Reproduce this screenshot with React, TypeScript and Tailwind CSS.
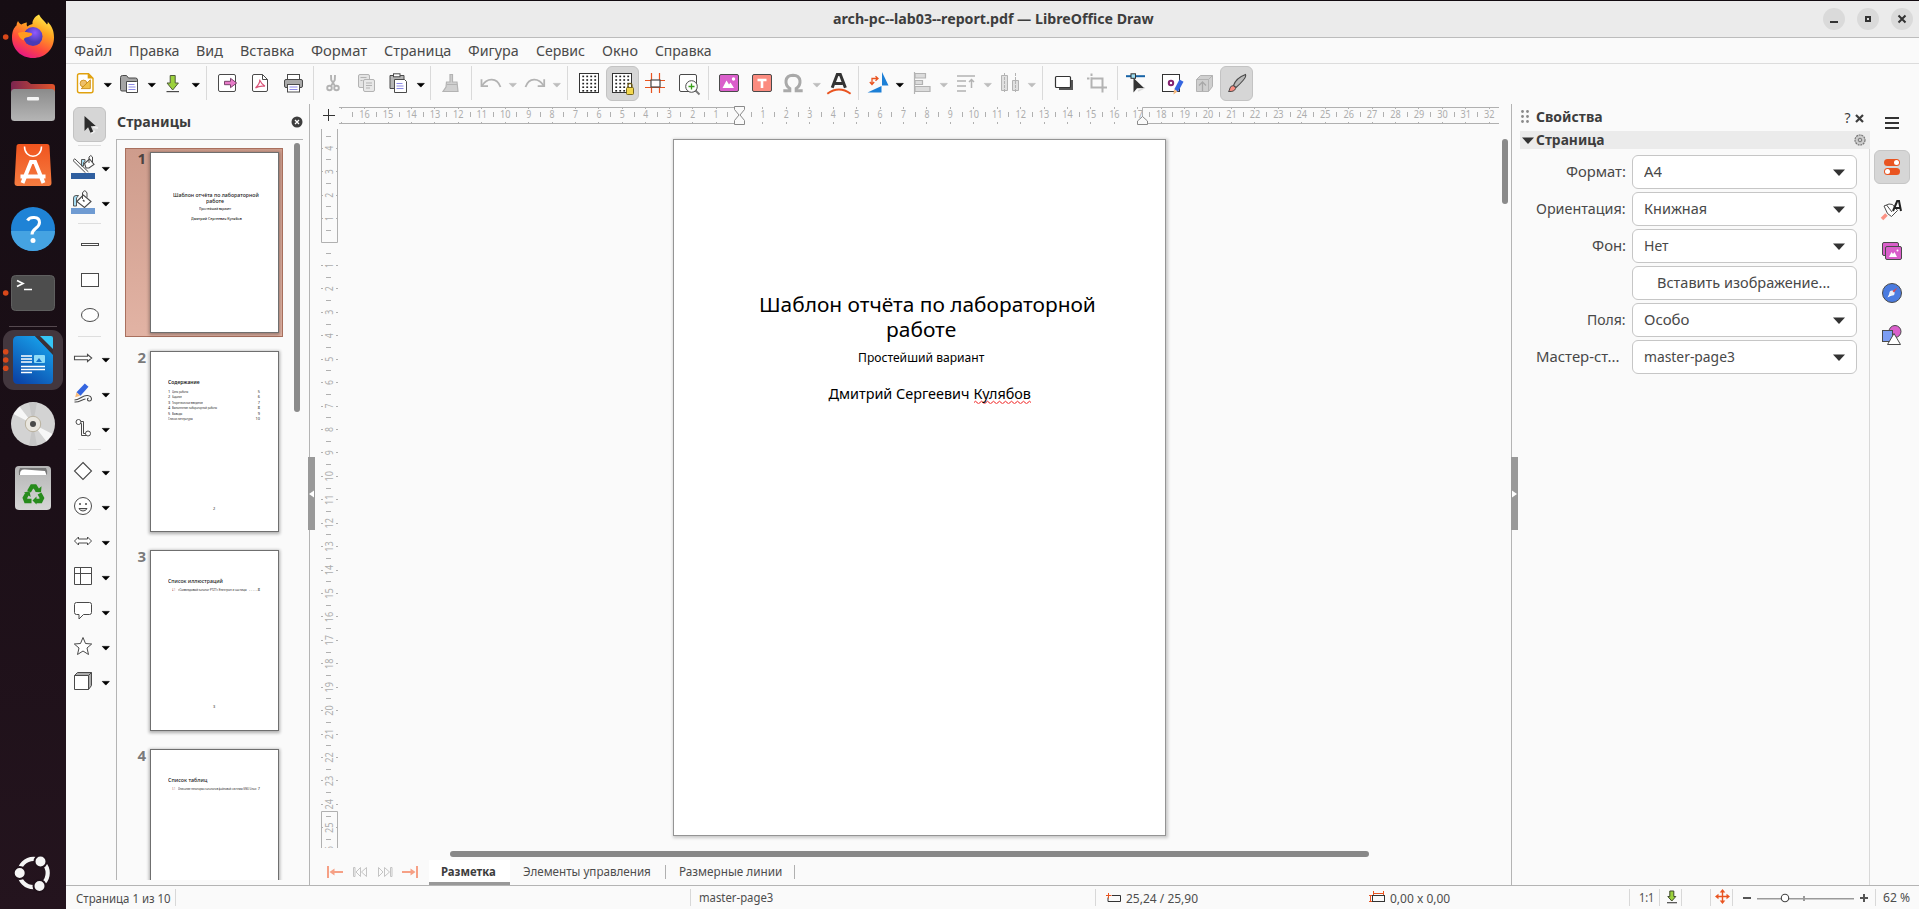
import { useLayoutEffect, useRef, useState } from "react";
import type { ReactNode } from "react";

/* Text set to a fixed advance width. */
function T({ w, className = "", children }: { w: number; className?: string; children: ReactNode }) {
  const ref = useRef<HTMLSpanElement>(null);
  const [scale, setScale] = useState(1);
  useLayoutEffect(() => {
    if (ref.current) setScale(w / ref.current.offsetWidth);
  }, [w]);
  return (
    <span className={"block shrink-0 whitespace-nowrap " + className} style={{ width: w }}>
      <span ref={ref} className="inline-block origin-left" style={{ transform: `scaleX(${scale})` }}>
        {children}
      </span>
    </span>
  );
}

const D = "#4a4a4a";
const G = "#b3b3b3";

function Ic({ children, w = 23 }: { children: ReactNode; w?: number }) {
  return (
    <svg width={w} height={24} viewBox={`0 0 ${w} 24`} fill="none" className="shrink-0 overflow-visible">
      {children}
    </svg>
  );
}

function Btn({ children, on }: { children: ReactNode; on?: boolean }) {
  return (
    <div
      className={
        "flex h-[35px] w-[33px] shrink-0 justify-center rounded-md border pt-1 " +
        (on ? "border-[#c3c3c3] bg-[#d6d6d6]" : "border-transparent")
      }
    >
      <Ic>{children}</Ic>
    </div>
  );
}

function Arr({ off }: { off?: boolean }) {
  return (
    <svg width="11" height="24" viewBox="0 0 11 24" className="mt-[5px] shrink-0">
      <path d="M2.3 12.4h7L5.8 16.1z" fill={off ? "#bdbdbd" : "#000"} stroke={off ? "#bdbdbd" : "#000"} strokeWidth=".7" />
    </svg>
  );
}

function Sep({ className }: { className: string }) {
  return (
    <div className={"flex h-[34px] shrink-0 justify-center " + className}>
      <div className="w-px bg-[#dadada]" />
    </div>
  );
}

const grid = [0, 1, 2, 3, 4].flatMap((r) => [0, 1, 2, 3].map((c) => [4 + c * 4, 4 + r * 3.6]));

function GridIcon() {
  return (
    <>
      <rect x="1.500" y="2.500" width="19" height="19" fill="#fff" stroke="#333" />
      {grid.map(([x, y], i) => (
        <rect key={i} x={x + 0.3} y={y + 0.6} width="1.800" height="1.600" fill="#222" />
      ))}
    </>
  );
}

function Toolbar() {
  return (
    <div className="flex h-10 pt-0.5 pl-[3px]">
      <Btn>
        <path d="M5.500 2.700h9l4.500 4.600v12.400q0 2-2 2H5.500q-2 0-2-2v-15q0-2 2-2z" fill="#fff" stroke="#e0a10e" strokeWidth="1.400" />
        <path d="M13.700 2.200l5.600 5.400h-5.600z" fill="#e0a10e" />
        <circle cx="9.500" cy="12.500" r="3.400" fill="#eec06a" stroke="#c98a12" strokeWidth=".8" />
        <path d="M7.200 17.600h9.100V8.800z" fill="#f0c14a" stroke="#c98a12" strokeWidth=".9" />
      </Btn>
      <Arr />
      <Btn>
        <path d="M2.500 18.500v-12q0-2 2-2h4l2 2.500h7q2 0 2 2v9.500q0 1.500-1.500 1.500H4q-1.500 0-1.500-1.500z" fill="#a5a5a5" stroke={D} />
        <path d="M8.500 10.500h10l1 1v10h-11z" fill="#fff" stroke={D} />
        <path d="M10.500 13.500h6M10.500 16h7M10.500 18.500h7" stroke="#8e8be6" />
      </Btn>
      <Arr />
      <Btn>
        <path d="M8.200 4.500h5v7.500h3.200l-5.700 7-5.700-7h3.200z" fill="#9bd13c" stroke="#4f5b3a" />
        <path d="M4.500 20.600h12.500" stroke={D} strokeWidth="1.200" />
      </Btn>
      <Arr />
      <Sep className="w-[10px]" />
      <Btn>
        <rect x="2.500" y="3.500" width="17" height="17" rx="1.500" fill="#fff" stroke={D} />
        <path d="M8.500 10.300h6V7.300l6.200 4.700-6.200 4.700v-3h-6z" fill="#e77bc8" stroke="#6d3a60" strokeWidth=".9" />
      </Btn>
      <Btn>
        <path d="M3.500 5q0-1.500 1.500-1.500h8.500l5 5v10.500q0 1.500-1.500 1.500H5q-1.500 0-1.500-1.500z" fill="#fff" stroke={D} />
        <path d="M13.500 3.500v5h5" stroke={D} />
        <path d="M10.700 8.500q.5 4-4.200 8.500 4-2.500 9.500-1.700-3.500-2-5-5.800" stroke="#d9557a" strokeWidth="1.100" />
      </Btn>
      <Btn>
        <rect x="5.500" y="3.500" width="12" height="6" fill="#fff" stroke={D} />
        <rect x="2.500" y="8.500" width="18" height="8" rx="1.500" fill="#a9a9a9" stroke={D} />
        <rect x="5.500" y="13.500" width="12" height="7.500" fill="#fff" stroke={D} />
        <path d="M7.500 16h8M7.500 18.500h8" stroke="#8e8be6" />
      </Btn>
      <Sep className="w-[6px]" />
      <Btn>
        <path d="M10 4l.2 5 3.800 6M14 4l-.2 5-3.800 6" stroke={G} strokeWidth="1.900" />
        <circle cx="8.500" cy="17" r="2.300" stroke={G} strokeWidth="1.900" />
        <circle cx="15.500" cy="17" r="2.300" stroke={G} strokeWidth="1.900" />
      </Btn>
      <Btn>
        <rect x="4.500" y="3.500" width="11" height="13" rx="1.500" fill="#e4e4e4" stroke={G} />
        <rect x="9.500" y="8.500" width="11" height="12" rx="1.500" fill="#e8e8e8" stroke={G} />
        <path d="M6.500 6.500h6M6.500 9.500h2M12 12h6M12 14.500h6M12 17h4" stroke={G} />
      </Btn>
      <Btn>
        <path d="M3 4.500h14v13H3z" fill="#b5b5b5" stroke={D} />
        <rect x="6.500" y="2.800" width="6.500" height="3" fill="#fff" stroke={D} />
        <path d="M7.500 8.500h10l2 2v11h-12z" fill="#fff" stroke={D} />
        <path d="M9.500 12.500h6M9.500 15h7M9.500 17.500h7" stroke="#8e8be6" />
      </Btn>
      <Arr />
      <Sep className="w-[9px]" />
      <Btn>
        <path d="M10 3.500h2.500v7.500h4.500l1 9.500H3l3-4.500.5-5H10z" fill="#d0d0d0" stroke={G} strokeWidth="1.200" />
        <path d="M7 13.500h10" stroke={G} />
      </Btn>
      <Sep className="w-[6px]" />
      <Btn>
        <path d="M2.500 8.200v7h6.500" stroke={G} strokeWidth="1.800" />
        <path d="M3 14.800C8 6.500 18 6.500 21.500 16" stroke={G} strokeWidth="1.800" />
      </Btn>
      <Arr off />
      <Btn>
        <path d="M21.200 8.200v7h-6.500" stroke={G} strokeWidth="1.800" />
        <path d="M20.700 14.800C15.700 6.500 6 6.500 2.500 16" stroke={G} strokeWidth="1.800" />
      </Btn>
      <Arr off />
      <Sep className="w-[11px]" />
      <Btn>
        <GridIcon />
      </Btn>
      <Btn on>
        <GridIcon />
        <path d="M17 17v-2.500q0-2.200 2-2.200t2 2.200V17" stroke="#6b5a10" strokeWidth="1.200" />
        <rect x="15.500" y="16.500" width="7" height="7" rx="1" fill="#f3d84e" stroke="#6b5a10" strokeWidth=".9" />
      </Btn>
      <Btn>
        <path d="M7.500 2v20M15.500 2v20M1 9.500h20M1 16.500h20" stroke="#e95420" strokeWidth="1.200" />
        <rect x="7" y="9" width="9" height="7" fill="#fff" stroke={D} strokeWidth="1.200" />
      </Btn>
      <Btn>
        <rect x="2.500" y="3.500" width="17" height="17" rx="1.500" fill="#fff" stroke={D} />
        <circle cx="14.500" cy="15.500" r="5.800" fill="#fff" stroke={D} />
        <path d="M14.500 12.500v6M11.500 15.500h6" stroke="#3aa01c" strokeWidth="1.300" />
        <path d="M18.500 19.500l4 4" stroke="#777" strokeWidth="1.800" />
      </Btn>
      <Sep className="w-[7px]" />
      <Btn>
        <rect x="2.500" y="3.500" width="19" height="17" rx="1.500" fill="#da5fcb" stroke={D} />
        <path d="M5.500 17l4-7.500 2.500 4 1.500-2 3.500 5.500z" fill="#fff" />
        <circle cx="16.500" cy="8" r="1.700" fill="#fff" />
      </Btn>
      <Btn>
        <rect x="2.500" y="3.500" width="19" height="17" rx="1.500" fill="#fb8c80" stroke={D} />
        <path d="M7.500 9h9M12 9v8" stroke="#fff" strokeWidth="2.600" />
      </Btn>
      <Btn>
        <path
          d="M.3 19.800h6.500v-2.300C1.500 14 1 4.500 10 4.200c9 .3 8.500 9.800 3.200 13.300v2.300h6.500"
          stroke="#a9a9a9"
          strokeWidth="3"
        />
      </Btn>
      <Arr off />
      <Btn>
        <path d="M5.200 16.800L10.300 3.500h3l5.100 13.300M8 12.500h7.500" stroke="#333" strokeWidth="3" />
        <path d="M.3 22.800q11.700-8.500 23.300 0" stroke="#e95420" strokeWidth="2" />
      </Btn>
      <Sep className="w-[6px]" />
      <Btn>
        <path d="M16 1v13.500h6.500zM15.500 15v6.500H1.500z" fill="#1c7fd6" />
        <path d="M11.500 7.500H6V13M9.500 5.300l2.500 2.200-2.500 2.200M3.800 11L6 13.500 8.200 11" stroke="#e95420" strokeWidth="1.300" />
      </Btn>
      <Arr />
      <Btn>
        <path d="M4.500 1v22" stroke={G} strokeWidth="1.200" />
        <path d="M5 2.500h10.500v4.500H5zM5 9.500h7.500v4H5zM5 15.500h15v5H5z" fill="#dcdcdc" stroke={G} strokeWidth="1.200" />
      </Btn>
      <Arr off />
      <Btn>
        <path d="M3 5h18M3 10h9M3 15h9M3 20h9" stroke={G} strokeWidth="1.700" />
        <path d="M17.500 17V8.500M15 11l2.500-2.500L20 11" stroke={G} strokeWidth="1.500" />
      </Btn>
      <Arr off />
      <Btn>
        <path d="M3.500 4.500h6v15h-6zM14.500 9.500h6v10h-6z" fill="#e0e0e0" stroke={G} />
        <path d="M6.500 2v20M17.500 2v20" stroke={G} strokeDasharray="3 1" />
      </Btn>
      <Arr off />
      <Sep className="w-[10px]" />
      <Btn>
        <rect x="7" y="9" width="14" height="10" fill="#555" />
        <rect x="3.500" y="5.500" width="15" height="11" rx="1" fill="#fff" stroke="#333" strokeWidth="1.200" />
      </Btn>
      <Btn>
        <path d="M6.500 2.500v14h15.500M2 7.500h15.500v14" stroke={G} strokeWidth="2" strokeDasharray="2.500 1.200 40" />
      </Btn>
      <Sep className="w-[8px]" />
      <Btn>
        <path d="M0 5.200h19" stroke="#1763a6" strokeWidth="2" />
        <rect x="5" y="2.800" width="4.500" height="4.500" fill="#9fe0f5" stroke="#333" />
        <path d="M12 20l7-3.500" stroke="#ddd" strokeWidth="1.500" />
        <path d="M7.500 7v14.500l3.500-4.200 7-.3z" fill="#333" />
      </Btn>
      <Btn>
        <rect x="3.500" y="3.500" width="17" height="17" fill="#fff" stroke="#333" />
        <circle cx="12" cy="12" r="2.200" stroke="#83226f" strokeWidth="2" />
        <path d="M20.500 8.500l4 2.300-5.500 10-3.700-2.500z" fill="#3465e0" />
        <path d="M15 18.200l3.500 2.200-4 3z" fill="#f5b97c" />
      </Btn>
      <Btn>
        <path d="M4.500 8.500l4-4h12v11l-4 5h-12z" fill="#cfcfcf" stroke={G} />
        <path d="M4.500 8.500h12v12M16.500 8.500l4-4" stroke={G} />
        <path d="M10.500 20v-8M7 14.500L10.500 11l3.500 3.500" stroke="#a8a8a8" strokeWidth="1.300" />
      </Btn>
      <Btn on>
        <path d="M8.500 14.500Q11 7 20.500 3.500q1 2-2.500 6-3.500 4-7 7z" fill="#b9b9b9" stroke={D} strokeWidth="1.100" />
        <path d="M3.500 20.500q1-1 1.500-3.500.8-2.500 3.200-2.300 2.800.8 2.300 3-1.200 3.200-7 2.800z" fill="#fb8c80" stroke={D} />
      </Btn>
    </div>
  );
}

function Tool({ children, drop }: { children: ReactNode; drop?: boolean }) {
  return (
    <div className={"flex h-[35px] shrink-0 items-start gap-[5px] pt-1.5 " + (drop ? "pl-[5px]" : "pl-3")}>
      <Ic w={24}>{children}</Ic>
      {drop && (
        <div className="-mt-[5px]">
          <Arr />
        </div>
      )}
    </div>
  );
}

function ToolSep({ className }: { className: string }) {
  return (
    <div className={"shrink-0 pl-3 " + className}>
      <div className="h-px w-[23px] bg-[#dedede]" />
    </div>
  );
}

function Tools() {
  return (
    <div className="flex w-[50px] shrink-0 flex-col pt-[3px]">
      <div className="ml-[7px] flex h-[35px] w-[33px] shrink-0 justify-center rounded-md border border-[#c3c3c3] bg-[#d6d6d6] pt-1">
        <Ic>
          <path d="M13 21.500l4-2.500M15 15l5 1" stroke="#eee" strokeWidth="2" />
          <path d="M6.500 4v15l3.600-3.700 2.400 5.500 2.700-1.200-2.400-5.300 5-.2z" fill="#2b2b2b" />
        </Ic>
      </div>
      <ToolSep className="h-[7px] pt-[3px]" />
      <Tool drop>
        <path d="M10.500 11V4.500h3.500v2l-1.500 1v3.500z" fill="#a5dcf2" stroke={D} strokeWidth=".9" />
        <path d="M13.500 8.500l5-4.500 4.500 5.500-5 3.500h-3z" fill="#fff" stroke={D} strokeWidth="1.100" />
        <path d="M18 8V2q1.800-3 3.500 0v5" stroke={D} />
        <path d="M2 5.500L3.800 3.800l13.500 13" stroke={D} strokeWidth="1" />
        <path d="M2 5.500l12.500 12.300" stroke={D} strokeWidth="1" />
        <rect x="0" y="18" width="24" height="6" fill="#2f5f9f" />
      </Tool>
      <Tool drop>
        <path d="M2.500 16V8q0-2.500 2.500-2.500h2.500L5.500 8v8z" fill="#a5dcf2" stroke={D} strokeWidth=".9" />
        <path d="M5.800 11.500l6.500-6.500 7.700 6.500-6.500 6z" fill="#fff" stroke={D} strokeWidth="1.100" />
        <path d="M11.500 9V3q2.200-4.500 4.500 0v4.500" stroke={D} />
        <path d="M12 10l1.500 1.500" stroke={D} strokeWidth="1.500" />
        <rect x="0" y="18" width="24" height="6" fill="#6f9bd2" />
      </Tool>
      <ToolSep className="h-[8px] pt-[4px]" />
      <Tool>
        <rect x="3.500" y="10.500" width="17" height="2" fill="#fff" stroke={D} />
      </Tool>
      <Tool>
        <rect x="3.500" y="5.500" width="17" height="13" fill="#fff" stroke={D} />
      </Tool>
      <Tool>
        <ellipse cx="12" cy="12" rx="8.500" ry="6.500" fill="#fff" stroke={D} />
      </Tool>
      <ToolSep className="h-[8px] pt-[4px]" />
      <Tool drop>
        <path d="M3.500 10.300h13V8.500l4.200 3.500-4.200 3.500v-1.800h-13z" fill="#fff" stroke={D} strokeWidth="1.100" />
      </Tool>
      <Tool drop>
        <path d="M13.800 2.500l3.700 3.300-8 9-4-3.500z" fill="#3465e0" />
        <path d="M5.500 11.300l3.700 3.500-5 1.500z" fill="#f5b97c" />
        <path d="M3.500 19c5 0 8-5 13-4.500 5 .5 5 6 1.500 5.500-2-.3-2-2.500-.5-3" stroke={D} strokeWidth="1.100" />
        <path d="M3.500 21c5 .5 7-2.500 11-3" stroke={D} strokeWidth="1.100" />
      </Tool>
      <Tool drop>
        <path d="M8 5.500h4.500v12H17M8 7.500h2.500v12H16" stroke={D} />
        <circle cx="7.500" cy="6" r="2.500" fill="#fff" stroke={D} />
        <circle cx="17" cy="17.500" r="2.500" fill="#fff" stroke={D} />
      </Tool>
      <ToolSep className="h-[8px] pt-[4px]" />
      <Tool drop>
        <path d="M12 3.500l8.500 8.500-8.500 8.500L3.500 12z" fill="#fff" stroke={D} strokeWidth="1.100" />
      </Tool>
      <Tool drop>
        <circle cx="12" cy="12" r="8.500" fill="#fff" stroke={D} />
        <path d="M9 9v2M15 9v2" stroke={D} strokeWidth="1.500" />
        <path d="M8 14.500h8q-1 2.500-4 2.500t-4-2.500z" fill="#ddd" stroke={D} />
      </Tool>
      <Tool drop>
        <path d="M3.500 12l4-4v2h9V8l4 4-4 4v-2h-9v2z" fill="#fff" stroke={D} />
      </Tool>
      <Tool drop>
        <path d="M3.500 3.500h17v17h-17zM9.500 3.500v17M3.500 9.500h17" fill="#fff" stroke={D} />
      </Tool>
      <Tool drop>
        <path d="M5.500 3.500h13q2 0 2 2v8q0 2-2 2h-6L8 20v-4.500H5.500q-2 0-2-2v-8q0-2 2-2z" fill="#fff" stroke={D} />
      </Tool>
      <Tool drop>
        <path d="M12 3.500l2.500 6 6.200.5-4.700 4 1.500 6.500-5.500-3.500-5.500 3.500L8 14l-4.700-4 6.200-.5z" fill="#fff" stroke={D} />
      </Tool>
      <Tool drop>
        <path d="M3.500 6.500l3-3h14v13l-3 4z" fill="#aaa" stroke={D} />
        <path d="M3.500 6.500h14v14h-14zM17.500 6.500l3-3" fill="#fff" stroke={D} />
      </Tool>
    </div>
  );
}

function DockItem({ children }: { children: ReactNode }) {
  return (
    <svg width="66" height="64" viewBox="0 0 66 64" fill="none" className="shrink-0">
      {children}
    </svg>
  );
}

function Dock() {
  return (
    <aside className="flex w-[66px] shrink-0 flex-col bg-linear-to-b from-[#160d13] via-[#1b0f17] to-[#24141e] pt-[5px]">
      <DockItem>
        <defs>
          <linearGradient id="ff" x1=".8" y1="0" x2=".3" y2="1">
            <stop offset="0" stopColor="#fff44f" />
            <stop offset=".35" stopColor="#ffa421" />
            <stop offset=".7" stopColor="#ff4a3d" />
            <stop offset="1" stopColor="#e31587" />
          </linearGradient>
          <radialGradient id="fp" cx=".6" cy=".3">
            <stop offset="0" stopColor="#9059ff" />
            <stop offset="1" stopColor="#4a3bb5" />
          </radialGradient>
        </defs>
        <circle cx="5.700" cy="32" r="2.800" fill="#d8481a" />
        <path
          d="M39 9.500c2 4 5 6 8 10 1-1 1-2 .5-3 5 5 6.500 10 6.500 16 0 12-9 20.500-21 20.500S12 44 12 32.500c0-6 2-10 4.500-12 0-1.500.5-3 1.500-4.500 1 2 2 3 3.500 3.500 1.500-1 3.500-2 5.500-2-.5 1.500-.5 3 .5 4 1-1 3-2 5-2.500-.5-4 3-8 6.500-9.500z"
          fill="url(#ff)"
        />
        <circle cx="33" cy="31.500" r="9.500" fill="url(#fp)" />
        <path d="M18 28c3-1.500 10-1.500 14 .5 1 2-3 3.500-6 4-2 .5-2 2-2.500 3C20 34 18.500 31 18 28z" fill="#ff9a1f" />
      </DockItem>
      <DockItem>
        <defs>
          <linearGradient id="fl" x1="0" x2="1">
            <stop offset="0" stopColor="#7b2550" />
            <stop offset="1" stopColor="#e2542a" />
          </linearGradient>
          <linearGradient id="fg" x1="0" y1="0" x2="0" y2="1">
            <stop offset="0" stopColor="#8b8b8b" />
            <stop offset="1" stopColor="#b5b5b5" />
          </linearGradient>
        </defs>
        <path d="M11 24V15q0-3 3-3h13l4 3h21q3 0 3 3v8z" fill="url(#fl)" />
        <rect x="11" y="20" width="44" height="32" rx="3.500" fill="url(#fg)" />
        <rect x="27" y="28" width="12" height="3.500" rx="1" fill="#f4f4f4" />
      </DockItem>
      <DockItem>
        <defs>
          <linearGradient id="st" x1="0" y1="0" x2="0" y2="1">
            <stop offset="0" stopColor="#f0541e" />
            <stop offset="1" stopColor="#f57c41" />
          </linearGradient>
        </defs>
        <path d="M19 11h28q2.500 0 2.500 2.500L51.500 50q0 3-3 3h-31q-3 0-3-3l2-36.500q0-2.500 2.500-2.500z" fill="url(#st)" />
        <path d="M24.500 13.500c0 13 17 13 17 0" stroke="#fff" strokeWidth="1.500" />
        <path d="M22.500 50L31 29h4l8.500 21M20.500 43.500h25" stroke="#fff" strokeWidth="4" />
      </DockItem>
      <DockItem>
        <circle cx="33" cy="32" r="22" fill="#1f83d6" />
        <path d="M11 34a22 20 0 0 0 44 0z" fill="#45a3e2" />
        <path d="M27.500 23.500c2-4 12-4.500 12 2 0 6-7.500 5.500-7.500 12" stroke="#fff" strokeWidth="3" />
        <circle cx="33" cy="43.500" r="2.500" fill="#fff" />
      </DockItem>
      <DockItem>
        <circle cx="5.700" cy="32" r="2.800" fill="#d8481a" />
        <rect x="11.500" y="14.500" width="43" height="35" rx="4" fill="#4d4d4d" stroke="#5f5f5f" />
        <path d="M17 19.500l6 3-6 3M24 28.500h8" stroke="#fff" strokeWidth="1.700" />
      </DockItem>
      <div className="ml-[9px] h-[3px] w-12 pt-px">
        <div className="h-px bg-[#55494f]" />
      </div>
      <DockItem>
        <defs>
          <linearGradient id="lo" x1=".8" y1="0" x2=".2" y2="1">
            <stop offset="0" stopColor="#18a6ee" />
            <stop offset="1" stopColor="#0b45a8" />
          </linearGradient>
        </defs>
        <rect x="3" y="2" width="60" height="60" rx="11" fill="#43373e" />
        <path d="M18 8h17l18 18v26q0 4-4 4H18q-5 0-5-5V13q0-5 5-5z" fill="url(#lo)" />
        <path d="M35 8h5l13 13v6z" fill="#3a3036" />
        <path d="M40 8h11q2 0 2 2v11z" fill="#35c5f5" />
        <path d="M21 28h11M21 31h11M21 34h11M21 38.500h24M21 41.500h24M21 44.500h11" stroke="#fff" strokeWidth="1.500" />
        <rect x="34" y="27" width="11" height="8" rx="1" fill="#8fdcf7" />
        <path d="M36 34l3-4 3 4z" fill="#1470c8" />
        <circle cx="5.700" cy="23.800" r="2.800" fill="#d8481a" />
        <circle cx="5.700" cy="32" r="2.800" fill="#d8481a" />
        <circle cx="5.700" cy="40.200" r="2.800" fill="#d8481a" />
      </DockItem>
      <DockItem>
        <circle cx="33" cy="32" r="22" fill="#d3d3d3" />
        <path d="M33 32L13.500 22l6-7.500zM33 32l19.500 10-6 7.500z" fill="#f7f7f7" />
        <path d="M33 32L29 10.500h8zM33 32l-4 21.500h8z" fill="#c6c6c6" />
        <circle cx="33" cy="32" r="7.700" fill="#e9e6df" stroke="#b0a68f" strokeWidth=".8" />
        <circle cx="33" cy="32" r="3" fill="#4a4a4a" />
      </DockItem>
      <DockItem>
        <defs>
          <linearGradient id="tr" x1="0" y1="0" x2="0" y2="1">
            <stop offset="0" stopColor="#b5b5b5" />
            <stop offset="1" stopColor="#d6d6d6" />
          </linearGradient>
        </defs>
        <rect x="15" y="10" width="36" height="44" rx="4" fill="url(#tr)" />
        <path d="M20 12h26q2 3 1 7H19q-1-4 1-7z" fill="#777" />
        <path d="M20 18q0-5 5-4.500l20 1.500 1.500 4H20z" fill="#fff" />
        <g stroke="#278b1c" strokeWidth="4.300">
          <path d="M29 35.500l3-5h3l2.500 4" />
          <path d="M39.500 37.500l2.500 4.500-1.500 3H36" />
          <path d="M31.500 45H26l-1.200-3 2.200-4" />
        </g>
        <path d="M35 36l6 .3.500-6zM36.500 40.500v8l-4-4zM24 36.500l5.500-1.500 1.200 6z" fill="#278b1c" />
      </DockItem>
      <div className="grow" />
      <svg width="66" height="72" viewBox="0 0 66 72" fill="none" className="shrink-0">
        <circle cx="33.500" cy="36" r="14.200" stroke="#f5f5f5" strokeWidth="4.200" />
        <g fill="#f5f5f5" stroke="#20121b" strokeWidth="2">
          <circle cx="19.700" cy="36" r="6" />
          <circle cx="40.500" cy="24.500" r="6" />
          <circle cx="39.500" cy="49" r="6" />
        </g>
      </svg>
    </aside>
  );
}

const menu: [string, number][] = [
  ["Файл", 38], ["Правка", 50], ["Вид", 26.5], ["Вставка", 54.3], ["Формат", 56], ["Страница", 66.8],
  ["Фигура", 51], ["Сервис", 49.3], ["Окно", 36], ["Справка", 57],
];

function ThumbFrame({ n, children, on }: { n: number; children: ReactNode; on?: boolean }) {
  return (
    <div
      className={
        "flex h-[189px] w-[158px] shrink-0 border pt-[3px] " +
        (on ? "border-[#a9705e] bg-linear-to-b from-[#ce9c8c] to-[#e2b3a4]" : "border-transparent")
      }
    >
      <span className={"-mt-[2px] w-6 shrink-0 pr-[4px] text-right text-[15px] leading-[17px] font-bold " + (on ? "text-[#4d4340]" : "text-[#7a7a7a]")}>{n}</span>
      <div className="h-[181px] w-[129px] shrink-0 border border-[#6f6f6f] bg-white text-[#222] shadow-[0_1px_3px_1px_rgba(0,0,0,0.3)]">
        {children}
      </div>
    </div>
  );
}

const toc: [string, string, number, string][] = [
  ["1", "Цель работы", 16, "5"],
  ["2", "Задание", 10, "6"],
  ["3", "Теоретическое введение", 31, "7"],
  ["4", "Выполнение лабораторной работы", 45, "8"],
  ["5", "Выводы", 10, "9"],
];

function Pages() {
  return (
    <div className="relative flex w-[194px] shrink-0 flex-col border-r border-[#b4b4b4] text-[#3d3d3d]">
      <div className="flex h-[35px] shrink-0 items-start pt-2 pl-[1px]">
        <T w={74} className="text-[14px] leading-5 font-bold">Страницы</T>
        <svg width="12" height="12" viewBox="0 0 12 12" className="mt-[4px] ml-[99.500px]">
          <circle cx="6" cy="6" r="5.500" fill="#3d3d3d" />
          <path d="M4 4l4 4M8 4l-4 4" stroke="#fff" strokeWidth="1.300" />
        </svg>
      </div>
      <div className="flex h-[741px] w-[187px] overflow-hidden border-t border-l border-[#b4b4b4] pt-2 pl-2">
        <div className="flex w-[169px] shrink-0 flex-col gap-[10px]">
          <ThumbFrame n={1} on>
            <div className="pt-[38.500px] pl-[21.500px] text-[5.600px] leading-[6.300px] font-medium">
              <T w={86}>Шаблон отчёта по лабораторной</T>
              <T w={18} className="ml-[33px]">работе</T>
              <T w={32} className="mt-[2px] ml-[26px] text-[3.700px] leading-[5px]">Простейший вариант</T>
              <T w={51} className="mt-[4.500px] ml-[18.500px] text-[4.100px] leading-[6px]">Дмитрий Сергеевич Кулябов</T>
            </div>
          </ThumbFrame>
          <ThumbFrame n={2}>
            <div className="flex h-full flex-col pt-[27px] pr-[18px] pl-[17px] text-[3.900px] leading-[5.550px]">
              <T w={32} className="mb-[2.500px] text-[5.500px] leading-[7px] font-semibold">Содержание</T>
              {toc.map(([n, t, w, p]) => (
                <div key={n} className="flex">
                  <span className="w-1">{n}</span>
                  <T w={w}>{t}</T>
                  <span className="ml-auto">{p}</span>
                </div>
              ))}
              <div className="flex">
                <T w={25}>Список литературы</T>
                <span className="ml-auto">10</span>
              </div>
              <span className="mt-[84px] text-center">2</span>
            </div>
          </ThumbFrame>
          <ThumbFrame n={3}>
            <div className="flex h-full flex-col pt-[27px] pr-[18px] pl-[17px] text-[3.900px] leading-[5.550px]">
              <T w={55} className="mb-[2px] text-[5.500px] leading-[7px] font-medium">Список иллюстраций</T>
              <div className="flex pl-1">
                <T w={3.5} className="mr-[2.500px] text-[#b06040]">4.1</T>
                <T w={69}>«Созвездовый каталог PTZT» Электрон и частицы</T>
                <T w={8} className="ml-[2px]">. . . . .</T>
                <span className="ml-auto">8</span>
              </div>
              <span className="mt-[111px] text-center">3</span>
            </div>
          </ThumbFrame>
          <ThumbFrame n={4}>
            <div className="flex h-full flex-col pt-[27px] pr-[18px] pl-[17px] text-[3.900px] leading-[5.550px]">
              <T w={39} className="mb-[2px] text-[5.500px] leading-[7px] font-medium">Список таблиц</T>
              <div className="flex pl-1">
                <T w={3.5} className="mr-[2.500px] text-[#b06040]">3.1</T>
                <T w={78}>Описание некоторых каталогов файловой системы GNU Linux</T>
                <span className="ml-auto">7</span>
              </div>
            </div>
          </ThumbFrame>
        </div>
        <div className="-mt-[5px] h-[269px] w-1.5 rounded-full bg-[#8a8a8a]" />
      </div>
      <div className="absolute top-[353px] left-[192px] z-10 flex h-[73px] w-[7px] items-center bg-[#999]">
        <svg width="7" height="8" viewBox="0 0 7 8">
          <path d="M6 .5v7L1 4z" fill="#fff" />
        </svg>
      </div>
    </div>
  );
}

const U = 23.43;
const R = "#b0b0b0";

function HRuler() {
  const z = 739.5;
  const marks: ReactNode[] = [];
  for (let i = -17; i <= 32; i++) {
    const x = z + i * U;
    if (i !== 0 && x > 339) {
      marks.push(
        <path key={"u" + i} d={`M${Math.floor(x) + 0.5} 107v2M${Math.floor(x) + 0.5} 122v2`} stroke={R} />,
      );
      if (i > -17)
        marks.push(
          <text key={"t" + i} x={x} y="118" textAnchor="middle" textLength={Math.abs(i) > 9 ? 10.5 : 5} lengthAdjust="spacingAndGlyphs">
            {Math.abs(i)}
          </text>,
        );
    }
    const h = Math.floor(x + U / 2) + 0.5;
    if (h > 345 && h < 1495) marks.push(<path key={"h" + i} d={`M${h} 112v5`} stroke={R} />);
  }
  return (
    <svg width="1201" height="25" viewBox="310 104 1201 25" fill="none" className="shrink-0">
      <g fill="#adadad" fontFamily="Noto Sans, sans-serif" fontSize="10">{marks}</g>
      <path d="M339 107.500H740M339 123.500H740M1499 107.500H1142.500V123.500H1499" stroke={R} />
      <path d="M323 115.500h12M328.500 109v12" stroke="#333" />
      <path d="M734.500 106.500h10v3l-4.500 5.500 4.500 5.500v4h-10v-4l4.500-5.500-4.500-5.500zM1137.500 124.500v-3.500l5-4.500 5 4.500v3.500z" fill="#fafafa" stroke="#8a8a8a" />
    </svg>
  );
}

function VRuler() {
  const z = 242;
  const marks: ReactNode[] = [];
  for (let i = -5; i <= 26; i++) {
    const y = z + i * U;
    const yy = Math.floor(y) + 0.5;
    if (i !== 0 && yy > 130 && yy < 840)
      marks.push(<path key={"u" + i} d={`M321 ${yy}h2M336 ${yy}h2`} stroke={R} />);
    if (i !== 0 && i !== -5)
      marks.push(
        <text
          key={"t" + i}
          transform={`translate(333 ${y}) rotate(-90)`}
          textAnchor="middle"
          textLength={Math.abs(i) > 9 ? 10.5 : 5}
          lengthAdjust="spacingAndGlyphs"
        >
          {Math.abs(i)}
        </text>,
      );
    const h = Math.floor(y + U / 2) + 0.5;
    if (h > 130 && h < 845) marks.push(<path key={"h" + i} d={`M326 ${h}h5`} stroke={R} />);
  }
  return (
    <svg width="29" height="719" viewBox="310 129 29 719" fill="none" className="shrink-0">
      <g fill="#adadad" fontFamily="Noto Sans, sans-serif" fontSize="10">{marks}</g>
      <path d="M321.500 129V242.500H337.500V129M321.500 848V811.500H337.500V848" stroke={R} />
    </svg>
  );
}

function Canvas() {
  return (
    <div className="flex w-[1201px] shrink-0 flex-col">
      <HRuler />
      <div className="flex h-[719px]">
        <VRuler />
        <div className="w-[1163px] pt-[10px] pl-[334px]">
          <div className="flex h-[697px] w-[493px] flex-col items-start border border-[#949494] bg-white pt-[152px] text-black shadow-[1px_1px_3px_1px_rgba(0,0,0,0.2)]">
            <T w={337} className="ml-[84.500px] text-[20.500px] leading-[25px]">Шаблон отчёта по лабораторной</T>
            <T w={70.5} className="ml-[212px] text-[20.500px] leading-[25px]">работе</T>
            <T w={126} className="mt-[6px] ml-[183.500px] text-[12.500px] leading-5">Простейший вариант</T>
            <div className="mt-[16px] ml-[154.500px] flex gap-[4px] text-[14.400px] leading-5">
              <T w={141}>Дмитрий Сергеевич</T>
              <div className="flex flex-col">
                <T w={57}>Кулябов</T>
                <svg width="57" height="4" viewBox="0 0 57 4" fill="none" className="-mt-[4px]">
                  <path
                    d="M0 2.500q1.500-2.500 3 0t3 0 3 0 3 0 3 0 3 0 3 0 3 0 3 0 3 0 3 0 3 0 3 0 3 0 3 0 3 0 3 0 3 0 3 0"
                    stroke="#f02020"
                  />
                </svg>
              </div>
            </div>
          </div>
        </div>
        <div className="mt-[10px] h-[65px] w-1.5 rounded-full bg-[#8a8a8a]" />
      </div>
      <div className="h-3 shrink-0 pt-[3px] pl-[140px]">
        <div className="h-1.5 w-[919px] rounded-full bg-[#888]" />
      </div>
      <div className="flex h-[25px] text-[13px] leading-[22px] text-[#4d4d4d]">
        <svg width="119" height="25" viewBox="310 860 119 25" fill="none">
          <path d="M328 866v12M417 866v12" stroke="#f6a085" strokeWidth="2" />
          <path d="M343 872h-11M402 872h11" stroke="#f6a085" strokeWidth="2" />
          <path d="M329.500 872l5-3.500v7zM415.500 872l-5-3.500v7z" fill="#f6a085" />
          <path
            d="M353.500 867.500h1.500v9h-1.500zM360.500 867.500v9l-4.500-4.500zM366.500 867.500v9l-5-4.500zM378.500 867.500v9l4.500-4.500zM384.500 867.500v9l5-4.500zM390.500 867.500h1.500v9h-1.500z"
            stroke="#c4c4c4"
          />
        </svg>
        <div className="w-[81px] border-b-3 border-[#999] bg-white pl-3">
          <T w={55} className="font-bold text-[#3d3d3d]">Разметка</T>
        </div>
        <T w={128} className="ml-[13px]">Элементы управления</T>
        <div className="mt-[5px] ml-[14px] h-[14px] w-px bg-[#b0b0b0]" />
        <T w={103} className="ml-[13px]">Размерные линии</T>
        <div className="mt-[5px] ml-[12px] h-[14px] w-px bg-[#b0b0b0]" />
      </div>
    </div>
  );
}

const fields: [string, number, string, number][] = [
  ["Формат:", 60, "A4", 18],
  ["Ориентация:", 90, "Книжная", 63],
  ["Фон:", 34, "Нет", 25],
  ["", 0, "Вставить изображение...", 173],
  ["Поля:", 39, "Особо", 45],
  ["Мастер-ст...", 84, "master-page3", 91],
];

function Sidebar() {
  return (
    <div className="relative flex w-[359px] shrink-0 flex-col border-l border-[#b4b4b4] text-[14px] text-[#3d3d3d]">
      <div className="flex h-[27px] shrink-0 items-start pt-[3px] pl-[9px]">
        <svg width="8" height="13" viewBox="0 0 8 13" fill="#8a8a8a" className="mt-[3px]">
          {[1.5, 6.5, 11.5].map((y) => (
            <g key={y}>
              <circle cx="1.500" cy={y} r="1.400" />
              <circle cx="6.500" cy={y} r="1.400" />
            </g>
          ))}
        </svg>
        <T w={67} className="ml-[7px] leading-5 font-bold">Свойства</T>
        <T w={6} className="ml-[241.500px] leading-[22px]">?</T>
        <svg width="9" height="9" viewBox="0 0 9 9" className="mt-[7px] ml-1">
          <path d="M1 1l7 7M8 1L1 8" stroke="#3d3d3d" strokeWidth="2.200" />
        </svg>
      </div>
      <div className="ml-2 flex h-[18px] shrink-0 items-center bg-[#ebebeb]">
        <svg width="12" height="7" viewBox="0 0 12 7" className="ml-[2px]">
          <path d="M0 .5h12L6 7z" fill="#333" />
        </svg>
        <T w={68} className="ml-[2px] leading-[18px] font-bold">Страница</T>
        <svg width="12" height="12" viewBox="0 0 12 12" fill="none" className="ml-[250px]">
          <circle cx="6" cy="6" r="5" fill="#ccc" stroke="#777" strokeWidth="1.200" strokeDasharray="2 .7" />
          <circle cx="6" cy="6" r="1.800" stroke="#777" />
        </svg>
      </div>
      <div className="flex grow flex-col gap-[3px] border-r border-[#d8d8d8] pt-[6px] pr-[11px] text-[#484848]">
        {fields.map(([l, lw, v, vw]) => (
          <div key={v} className="flex h-[34px]">
            <div className="flex w-[120px] justify-end pr-[6px] leading-[33px]">
              {l && <T w={lw} className={l.endsWith("...") ? "mr-[6px]" : ""}>{l}</T>}
            </div>
            <div
              className={
                "flex w-[225px] shrink-0 items-center rounded-md border border-[#c6c6c6] bg-white leading-[32px] " +
                (l ? "pr-[11px] pl-[11px]" : "pl-[24px]")
              }
            >
              <T w={vw}>{v}</T>
              {l && (
                <svg width="12" height="7" viewBox="0 0 12 7" className="ml-auto">
                  <path d="M0 .5h12L6 7z" fill="#333" />
                </svg>
              )}
            </div>
          </div>
        ))}
      </div>
      <div className="absolute top-[353px] -left-px z-10 flex h-[73px] w-[7px] items-center bg-[#999]">
        <svg width="7" height="8" viewBox="0 0 7 8">
          <path d="M1 .5v7L6 4z" fill="#fff" />
        </svg>
      </div>
    </div>
  );
}

function Tabs() {
  return (
    <div className="flex w-[49px] shrink-0 flex-col pt-[12px] pl-1">
      <svg width="36" height="22" viewBox="0 0 36 22" className="shrink-0">
        <path d="M11 2h14M11 7h14M11 12h14" stroke="#333" strokeWidth="1.800" />
      </svg>
      <div className="mt-[12px] flex h-[34px] w-9 shrink-0 items-center justify-center rounded-md border border-[#c6c6c6] bg-[#d6d6d6]">
        <svg width="16" height="16" viewBox="0 0 16 16">
          <rect width="16" height="7" rx="3.500" fill="#e95420" />
          <circle cx="12.500" cy="3.500" r="2.500" fill="#fff" />
          <rect y="9" width="16" height="7" rx="3.500" fill="#e95420" />
          <circle cx="3.500" cy="12.500" r="2.500" fill="#fff" />
        </svg>
      </div>
      <svg width="36" height="166" viewBox="1874 184 36 166" fill="none" className="shrink-0">
        <path d="M1882 219l4.500-4.500" stroke="#fb9284" strokeWidth="3.500" />
        <path d="M1884 206l3.500 7.500 4 3 6-6-5-6-3.500-.500zM1886.500 205l5.500 7" fill="#fff" stroke={D} />
        <path d="M1893 211l4.200-10h1.800l2 10M1895 208h5" stroke="#222" strokeWidth="2" />
        <rect x="1882.500" y="242.500" width="16" height="13" rx="1.500" fill="#da5fcb" stroke={D} />
        <rect x="1885.500" y="246.500" width="16" height="13" rx="1.500" fill="#da5fcb" stroke={D} />
        <path d="M1889 257l2.500-5 1.500 2 1.500-2 2.500 5z" fill="#fff" />
        <circle cx="1897.500" cy="250.500" r="1" fill="#fff" />
        <circle cx="1892" cy="293" r="9.500" fill="#4a7be0" stroke={D} />
        <path d="M1887.500 297.500l3-6 3 3z" fill="#fff" />
        <circle cx="1892" cy="293" r="2.600" fill="#e8eefa" />
        <path d="M1892.500 291l5-3.500-3.500 5z" fill="#e04646" />
        <circle cx="1895" cy="331.500" r="6" fill="#da5fcb" stroke={D} />
        <rect x="1882.500" y="330.500" width="10" height="11" fill="#7c9df2" stroke={D} />
        <path d="M1894 333.500l6.500 11h-13z" fill="#fff" stroke={D} />
      </svg>
    </div>
  );
}

function VLine({ className }: { className: string }) {
  return <div className={"mt-[3px] h-[17px] w-px shrink-0 bg-[#d8d8d8] " + className} />;
}

function Status() {
  return (
    <div className="flex h-6 shrink-0 border-t border-[#b4b4b4] text-[13px] leading-[23px] text-[#4d4d4d]">
      <T w={95} className="ml-[10px] leading-[24px]">Страница 1 из 10</T>
      <VLine className="ml-[4px]" />
      <VLine className="ml-[514px]" />
      <T w={74} className="ml-[8px]">master-page3</T>
      <VLine className="ml-[322px]" />
      <svg width="16" height="23" viewBox="1106 886 16 23" fill="none" className="ml-[10px]">
        <path d="M1112 895.500h8.500v6h-12.500v-4" stroke="#333" />
        <path d="M1106 895.500h5.500M1108.500 893v5.500" stroke="#e95420" />
      </svg>
      <T w={72} className="ml-[4px] leading-[25px]">25,24 / 25,90</T>
      <svg width="17" height="23" viewBox="1369 886 17 23" fill="none" className="ml-[171px]">
        <rect x="1372.500" y="895.500" width="12" height="6" stroke="#333" />
        <path d="M1373.500 891v4M1383.500 891v4M1373.500 893.500h10M1369 895.500h3M1369 901.500h3M1370.500 895.500v6" stroke="#e95420" />
      </svg>
      <T w={60} className="ml-[4px] leading-[25px]">0,00 x 0,00</T>
      <VLine className="ml-[179px]" />
      <T w={15} className="ml-[9px]">1:1</T>
      <VLine className="ml-[5px]" />
      <svg width="12" height="14" viewBox="0 0 12 14" className="mt-[4px] ml-[6px]">
        <path d="M3.800 1h4v5.500h2L5.800 11 1.800 6.500h2z" fill="#9bd13c" stroke="#3f4a2c" />
        <path d="M1 12.700h10" stroke={D} strokeWidth="1.200" />
      </svg>
      <VLine className="ml-[3px]" />
      <VLine className="ml-[28px]" />
      <svg width="15" height="15" viewBox="0 0 15 15" className="mt-[3px] ml-[4px]">
        <path d="M7.500 2v11M2 7.500h11" stroke="#e95420" strokeWidth="1.400" />
        <path d="M7.500 0l2.800 3.500H4.700zM7.500 15l2.800-3.500H4.700zM0 7.500l3.500-2.800v5.600zM15 7.500l-3.500-2.800v5.600z" fill="#e95420" />
      </svg>
      <VLine className="ml-[2px]" />
      <svg width="142" height="23" viewBox="1733 886 142 23" fill="none">
        <path d="M1743 898h8M1860 898h8M1864 894v8" stroke="#555" strokeWidth="2" />
        <path d="M1757 898.700h97" stroke="#9a9a9a" strokeWidth="1.500" />
        <path d="M1804 896v5" stroke="#9a9a9a" strokeWidth="2" />
        <circle cx="1785" cy="898" r="3.700" fill="#fff" stroke="#444" strokeWidth="1.100" />
      </svg>
      <VLine className="" />
      <T w={27} className="ml-[7px]">62 %</T>
    </div>
  );
}

export default function App() {
  return (
    <div className="flex h-[909px] w-[1919px] overflow-hidden bg-[#fafafa] font-['Noto_Sans',sans-serif]">
      <Dock />
      <main className="flex w-[1853px] flex-col border-t border-[#120a10]">
        <header className="flex h-[37px] shrink-0 items-center border-b border-[#bcbcbc] bg-[#ebebeb] pr-[6px] pl-[767px]">
          <T w={320.5} className="-mt-[2px] text-[14px] font-bold text-[#3d3d3d]">arch-pc--lab03--report.pdf — LibreOffice Draw</T>
          <svg width="90" height="22" viewBox="0 0 90 22" fill="none" className="ml-auto">
            <g fill="#dadada">
              <circle cx="11" cy="11" r="11" />
              <circle cx="45" cy="11" r="11" />
              <circle cx="79" cy="11" r="11" />
            </g>
            <path d="M7 14h8M75.500 7.500l7 7M82.500 7.500l-7 7" stroke="#333" strokeWidth="2" />
            <rect x="43" y="9" width="4" height="4" stroke="#333" strokeWidth="2" />
          </svg>
        </header>
        <nav className="flex h-[26px] shrink-0 items-center gap-[17px] border-b border-[#dcdcdc] pl-[8px] text-[14px] text-[#4a4a4a]">
          {menu.map(([m, w]) => (
            <T key={m} w={w}>{m}</T>
          ))}
        </nav>
        <Toolbar />
        <div className="flex h-[781px] shrink-0">
          <Tools />
          <Pages />
          <Canvas />
          <Sidebar />
          <Tabs />
        </div>
        <Status />
      </main>
    </div>
  );
}
